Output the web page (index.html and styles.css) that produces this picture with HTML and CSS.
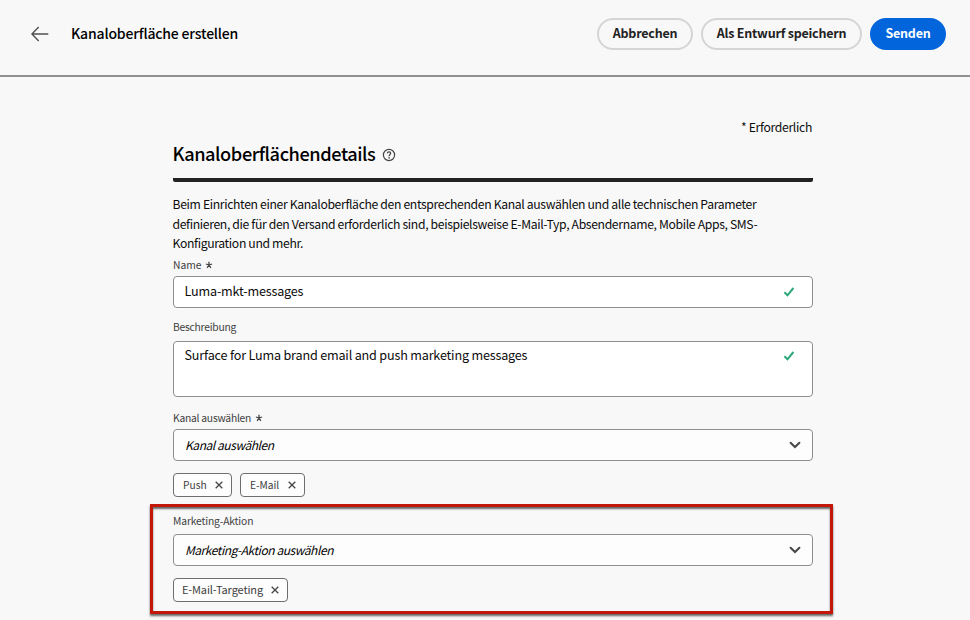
FILE: index.html
```html
<!DOCTYPE html>
<html lang="de">
<head>
<meta charset="utf-8">
<title>Kanaloberfläche erstellen</title>
<link rel="stylesheet" href="styles.css">
</head>
<body>
<svg class="defs" aria-hidden="true">
  <symbol id="check" viewBox="0 0 12 12"><path d="M1.4 6.2 4.5 9.3 10.4 2" fill="none" stroke="#2da87a" stroke-width="2"/></symbol>
  <symbol id="chevron" viewBox="0 0 12 8"><path d="M1.6 1.7 6 6 10.4 1.7" fill="none" stroke="#464646" stroke-width="2" stroke-linecap="round"/></symbol>
  <symbol id="cross" viewBox="0 0 8 8"><path d="M.7.7 7.3 7.3M7.3.7.7 7.3" fill="none" stroke="#464646" stroke-width="1.3"/></symbol>
  <symbol id="star" viewBox="0 0 8 8"><path d="M4 4V.8M4 4 .9 3M4 4 7.1 3M4 4 2.1 6.8M4 4 5.9 6.8" fill="none" stroke="#464646" stroke-width="1.3"/></symbol>
</svg>
<header class="topbar">
  <svg class="back" viewBox="0 0 18 16"><path d="M7.7 1 .9 8 7.7 15M1 8H17.3" fill="none" stroke="#505050" stroke-width="1.4"/></svg>
  <h1 class="title">Kanaloberfläche erstellen</h1>
  <div class="actions">
    <button class="btn btn-cancel">Abbrechen</button>
    <button class="btn btn-draft">Als Entwurf speichern</button>
    <button class="btn btn-send">Senden</button>
  </div>
</header>
<main class="form">
  <p class="required">* Erforderlich</p>
  <h2 class="heading"><span>Kanaloberflächendetails</span>
    <svg class="help" viewBox="0 0 14 14"><circle cx="7" cy="7" r="5.6" fill="none" stroke="#464646" stroke-width="1.2"/><path d="M5.3 5.4C5.4 4.3 6.1 3.9 7 3.9c1 0 1.7.6 1.7 1.4C8.7 6.5 7.1 6.6 7.1 8.2" fill="none" stroke="#464646" stroke-width="1.2"/><circle cx="7.1" cy="9.9" r=".8" fill="#464646"/></svg>
  </h2>
  <p class="intro">Beim Einrichten einer Kanaloberfläche den entsprechenden Kanal auswählen und alle technischen Parameter<br>definieren, die für den Versand erforderlich sind, beispielsweise E-Mail-Typ, Absendername, Mobile Apps, SMS-<br>Konfiguration und mehr.</p>
  <div class="label label-name"><span>Name</span><svg class="star"><use href="#star"/></svg></div>
  <div class="field"><span>Luma-mkt-messages</span><svg class="check"><use href="#check"/></svg></div>
  <div class="label label-desc"><span>Beschreibung</span></div>
  <div class="field area"><span>Surface for Luma brand email and push marketing messages</span><svg class="check"><use href="#check"/></svg></div>
  <div class="label label-channel"><span>Kanal auswählen</span><svg class="star"><use href="#star"/></svg></div>
  <div class="field select"><span>Kanal auswählen</span><svg class="chevron"><use href="#chevron"/></svg></div>
  <div class="tags">
    <div class="tag tag-push"><span>Push</span><svg class="cross"><use href="#cross"/></svg></div>
    <div class="tag tag-mail"><span>E-Mail</span><svg class="cross"><use href="#cross"/></svg></div>
  </div>
  <section class="highlight">
    <div class="label label-action"><span>Marketing-Aktion</span></div>
    <div class="field select"><span>Marketing-Aktion auswählen</span><svg class="chevron"><use href="#chevron"/></svg></div>
    <div class="tags">
      <div class="tag tag-target"><span>E-Mail-Targeting</span><svg class="cross"><use href="#cross"/></svg></div>
    </div>
  </section>
</main>
</body>
</html>
```
FILE: styles.css
```css
* { box-sizing: border-box; }
body {
  margin: 0;
  height: 620px;
  overflow: hidden;
  background: #f8f8f8;
  color: #0c0c0c;
  font-family: "Noto Sans CJK JP", "Noto Sans", sans-serif;
  font-size: 12.2px;
}
.defs { display: none; }
h1, h2, p { margin: 0; }
svg { flex: none; display: block; }
span { white-space: nowrap; }

.topbar {
  display: flex;
  height: 77px;
  padding: 18px 24px 0 31px;
  border-bottom: 2px solid #909090;
}
.back { width: 18px; height: 16px; margin-top: 8px; }
.title { margin-left: 22px; font-size: 14px; font-weight: 500; line-height: 30px; letter-spacing: -.18px; color: #000; }
.actions { display: flex; gap: 8px; margin-left: auto; }
.btn {
  height: 32px;
  padding: 0 0 2px;
  border: 2px solid #d5d5d5;
  border-radius: 16px;
  background: transparent;
  color: #222;
  font-family: inherit;
  font-size: 12.5px;
  font-weight: 700;
  line-height: 26px;
  letter-spacing: -.22px;
}
.btn-cancel { width: 96px; }
.btn-draft { width: 161px; }
.btn-send { width: 76px; border-color: #0265dc; background: #0265dc; color: #fff; }

.form { width: 640px; margin-left: 173px; padding-top: 40px; }
.required { height: 21px; padding-right: 1px; line-height: 20px; letter-spacing: -.32px; text-align: right; }
.heading {
  display: flex;
  align-items: center;
  height: 44px;
  padding-bottom: 10px;
  border-bottom: 4px solid #222;
  border-radius: 2px;
  font-size: 18.2px;
  font-weight: 500;
  line-height: 28px;
  letter-spacing: -.43px;
  color: #000;
}
.heading span { margin-left: -.5px; }
.help { width: 14px; height: 14px; margin: 3px 0 0 6.5px; }
.intro { margin-left: -.5px; padding-top: 13px; height: 74px; line-height: 19.5px; letter-spacing: -.35px; white-space: nowrap; }

.label { display: flex; align-items: center; height: 16px; color: #404040; font-size: 10.3px; line-height: 16px; letter-spacing: -.14px; }
.label-name { margin: 1px 0 3px; letter-spacing: 0; }
.label-desc { margin: 11px 0 6px; letter-spacing: -.24px; }
.label-channel { margin: 13px 0 3px; letter-spacing: -.24px; }
.star { width: 8px; height: 8px; margin-left: 4px; }
.field {
  display: flex;
  align-items: center;
  justify-content: space-between;
  height: 32px;
  padding: 0 17px 1px 11px;
  border: 1px solid #8e8e8e;
  border-radius: 4px;
  background: #fff;
  font-size: 12.6px;
  line-height: 20px;
  letter-spacing: -.18px;
}
.field span { margin: -1px 0 0 -.5px; }
.area { height: 56px; align-items: flex-start; padding-top: 4px; }
.check { width: 12px; height: 12px; }
.area .check { margin-top: 4px; }
.select { padding: 0 11px; background: #fdfdfd; font-size: 12px; font-style: italic; letter-spacing: -.44px; color: #000; }
.select span { margin: 0; }
.chevron { width: 12px; height: 8px; }
.tags { display: flex; gap: 8px; margin-top: 12px; }
.tag {
  display: flex;
  align-items: center;
  justify-content: space-between;
  height: 24px;
  padding: 0 8px 0 9px;
  border: 1px solid #6e6e6e;
  border-radius: 4px;
  background: #fdfdfd;
  color: #404040;
  font-size: 10.2px;
  line-height: 16px;
}
.cross { width: 8px; height: 8px; }
.tag-push { width: 59px; }
.tag-mail { width: 65px; }
.tag-target { width: 115px; padding: 0 8px; font-size: 11px; letter-spacing: -.12px; }
.tag-target span { margin-top: -2px; }
.highlight {
  width: 683px;
  height: 110px;
  margin: 7px 0 0 -23px;
  padding: 6px 17px 0 20px;
  border: 3px solid #c3170a;
  box-shadow: 0 2px 2px #666, inset 0 2px 2px #666;
}
.label-action { margin-bottom: 5px; }
```
